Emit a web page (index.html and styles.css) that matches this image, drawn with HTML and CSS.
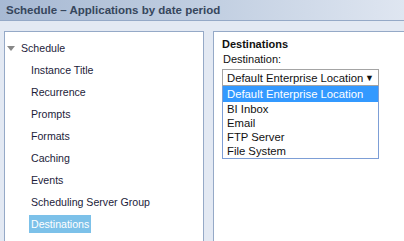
FILE: index.html
```html
<!DOCTYPE html>
<html>
<head>
<meta charset="utf-8">
<link rel="stylesheet" href="styles.css">
</head>
<body>
<div class="window">
  <div class="titlebar">Schedule – Applications by date period</div>
  <div class="content">
    <div class="panel nav">
      <div class="tree-root"><span class="tri"></span><span>Schedule</span></div>
      <ul class="tree">
        <li><span>Instance Title</span></li>
        <li><span>Recurrence</span></li>
        <li><span>Prompts</span></li>
        <li><span>Formats</span></li>
        <li><span>Caching</span></li>
        <li><span>Events</span></li>
        <li><span>Scheduling Server Group</span></li>
        <li><span class="sel">Destinations</span></li>
      </ul>
    </div>
    <div class="panel main">
      <div class="heading">Destinations</div>
      <div class="label">Destination:</div>
      <div class="combo">
        <div class="select"><span>Default Enterprise Location</span><span class="arrow">▼</span></div>
        <ul class="options">
          <li class="active">Default Enterprise Location</li>
          <li>BI Inbox</li>
          <li>Email</li>
          <li>FTP Server</li>
          <li>File System</li>
        </ul>
      </div>
    </div>
  </div>
</div>
</body>
</html>
```
FILE: styles.css
```css
html, body { margin: 0; padding: 0; }
body {
  width: 404px; height: 241px; overflow: hidden;
  font-family: "Liberation Sans", Arial, sans-serif;
  font-size: 11px;
  background: #e3e9f3;
}
.window { display: flex; flex-direction: column; height: 241px; }
.titlebar {
  height: 21px;
  box-sizing: border-box;
  border-bottom: 1px solid #95a9c7;
  background: linear-gradient(to right, #a7b9d3 0%, #c3d0e2 55%, #dfe6f1 100%);
  color: #36465c;
  font-weight: bold;
  font-size: 11.5px;
  line-height: 20px;
  padding-left: 6px;
}
.content {
  flex: 1;
  display: flex;
  gap: 9px;
  padding: 10px 0 0 4px;
}
.panel {
  background: #fff;
  border: 1px solid #95a9c7;
  border-bottom: none;
}
.nav { width: 198px; padding-top: 5px; box-sizing: content-box; font-size: 10.6px; }
.main { flex: 1; border-right: none; padding: 5px 0 0 8px; }
.tree-root {
  display: flex; align-items: center; height: 22px; color: #1c1c3a;
  padding-left: 2px;
}
.tri {
  width: 0; height: 0;
  border-left: 4px solid transparent;
  border-right: 4px solid transparent;
  border-top: 5px solid #888;
  margin-right: 6px;
}
.tree { list-style: none; margin: 0; padding: 0 0 0 24px; }
.tree li { height: 22px; display: flex; align-items: center; color: #1c1c3a; }
.tree li span { padding: 2px 2px; }
.tree li .sel { background: #7cc1e9; color: #fff; padding: 3px 2px; }
.heading { font-weight: bold; color: #111; font-size: 11px; height: 14px; line-height: 14px; }
.label { color: #111; height: 16px; line-height: 16px; padding-left: 1px; }
.combo { width: 157px; margin-top: 2px; font-size: 11.3px; }
.select {
  height: 17px; box-sizing: border-box;
  border: 1px solid #a4a4a4;
  display: flex; align-items: center; justify-content: space-between;
  padding: 0 4px 0 4px; color: #111;
}
.arrow { font-size: 9px; }
.options {
  list-style: none; margin: 0; padding: 0;
  border: 1px solid #7d9ed6;
  border-top: none;
}
.options li { height: 14px; line-height: 14px; padding-left: 4px; color: #111; }
.options li.active { background: #3399ff; color: #fff; height: 16px; line-height: 16px; }
```
